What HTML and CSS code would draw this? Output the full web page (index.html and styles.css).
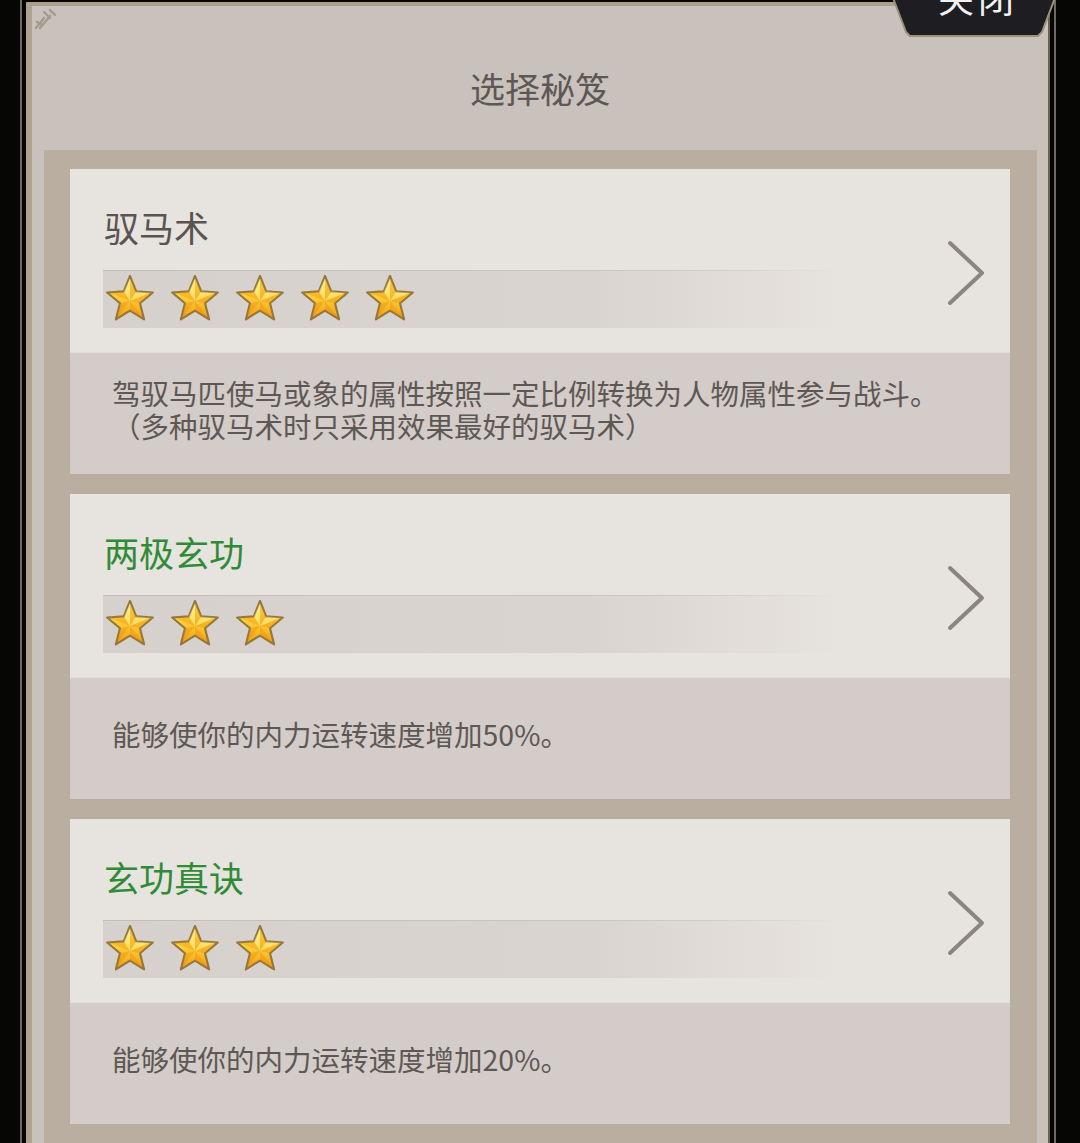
FILE: index.html
```html
<!DOCTYPE html>
<html lang="zh-CN">
<head>
<meta charset="utf-8">
<title>选择秘笈</title>
<link rel="stylesheet" href="styles.css">
</head>
<body>
<svg class="defs" width="0" height="0" aria-hidden="true">
  <defs>
    <linearGradient id="starGrad" x1="0" y1="0" x2="0" y2="1">
      <stop offset="0" stop-color="#fff27e"/>
      <stop offset="0.45" stop-color="#ffd23a"/>
      <stop offset="1" stop-color="#f29c14"/>
    </linearGradient>
    <symbol id="star" viewBox="0 0 52 50">
      <path d="M26 1 L32.47 17.1 L49.78 18.27 L36.46 29.4 L40.69 46.23 L26 37 L11.31 46.23 L15.54 29.4 L2.22 18.27 L19.53 17.1 Z" fill="url(#starGrad)" stroke="#94773a" stroke-width="2.2" stroke-linejoin="round"/>
      <g fill="#e68a0c" opacity="0.35">
        <polygon points="26,27 26,3 32.47,17.1"/>
        <polygon points="26,27 47.5,18.6 36.46,29.4"/>
        <polygon points="26,27 39.6,44.5 26,37"/>
        <polygon points="26,27 12.4,44.5 15.54,29.4"/>
        <polygon points="26,27 4.5,18.6 19.53,17.1"/>
      </g>
      <g fill="#fff8c0" opacity="0.35">
        <polygon points="26,27 26,3 19.53,17.1"/>
        <polygon points="26,27 47.5,18.6 32.47,17.1"/>
      </g>
    </symbol>
    <symbol id="chev" viewBox="0 0 40 66">
      <polyline points="4,3 36,33 4,63" fill="none" stroke="#8a8582" stroke-width="4" stroke-linecap="round" stroke-linejoin="round"/>
    </symbol>
  </defs>
</svg>

<div class="screen">
  <div class="panel">
    <svg class="corner" width="26" height="22" viewBox="0 0 26 22" aria-hidden="true">
      <path d="M2 20 L10 10 M6 20 L16 8 M10 4 L16 10 M16 2 L21 7 M3 14 L8 17" stroke="#a39b8e" stroke-width="2.4" stroke-linecap="round" fill="none"/>
    </svg>
    <h1 class="title">选择秘笈</h1>
    <div class="list">
      <div class="card">
        <div class="head">
          <div class="head-main">
            <div class="name">驭马术</div>
            <div class="bar">
              <svg class="star"><use href="#star"/></svg>
              <svg class="star"><use href="#star"/></svg>
              <svg class="star"><use href="#star"/></svg>
              <svg class="star"><use href="#star"/></svg>
              <svg class="star"><use href="#star"/></svg>
            </div>
          </div>
          <svg class="chev"><use href="#chev"/></svg>
        </div>
        <div class="desc">
          <p>驾驭马匹使马或象的属性按照一定比例转换为人物属性参与战斗。<br>（多种驭马术时只采用效果最好的驭马术）</p>
        </div>
      </div>

      <div class="card">
        <div class="head">
          <div class="head-main">
            <div class="name green">两极玄功</div>
            <div class="bar">
              <svg class="star"><use href="#star"/></svg>
              <svg class="star"><use href="#star"/></svg>
              <svg class="star"><use href="#star"/></svg>
            </div>
          </div>
          <svg class="chev"><use href="#chev"/></svg>
        </div>
        <div class="desc">
          <p>能够使你的内力运转速度增加50%。</p>
        </div>
      </div>

      <div class="card">
        <div class="head">
          <div class="head-main">
            <div class="name green">玄功真诀</div>
            <div class="bar">
              <svg class="star"><use href="#star"/></svg>
              <svg class="star"><use href="#star"/></svg>
              <svg class="star"><use href="#star"/></svg>
            </div>
          </div>
          <svg class="chev"><use href="#chev"/></svg>
        </div>
        <div class="desc">
          <p>能够使你的内力运转速度增加20%。</p>
        </div>
      </div>
    </div>
  </div>

  <div class="close">
    <svg class="close-bg" width="164" height="38" viewBox="0 0 164 38" aria-hidden="true">
      <polygon points="0,-2 13,32 17,36 145,36 149,32 162,-2" fill="#1d1d22" stroke="#9b9079" stroke-width="2"/>
    </svg>
    <span class="close-label">关闭</span>
  </div>
</div>
</body>
</html>
```

FILE: styles.css
```css
html, body {
  margin: 0;
  padding: 0;
}

body {
  width: 1080px;
  height: 1143px;
  overflow: hidden;
  background: #060605;
  font-family: "Noto Sans CJK SC", "Noto Sans", sans-serif;
}

.defs {
  position: absolute;
  width: 0;
  height: 0;
}

.screen {
  position: relative;
  height: 1143px;
  padding: 2px 0 0 26px;
  box-sizing: border-box;
}

.panel {
  position: relative;
  width: 1024px;
  height: 1160px;
  box-sizing: border-box;
  background: #c9c1bc;
  border-top: 4px solid #a9a08d;
  border-left: 6px solid #aca38f;
  border-right: 2px solid #6b624f;
  box-shadow: 0 0 0 4px #050504, 0 0 0 6px #6e6963;
}

.corner {
  position: absolute;
  left: 2px;
  top: 2px;
}

.title {
  margin: 0;
  height: 144px;
  box-sizing: border-box;
  padding-top: 62px;
  font-size: 35px;
  line-height: 40px;
  font-weight: normal;
  text-align: center;
  color: #5d5854;
}

.list {
  margin: 0 11px 0 12px;
  padding: 19px 27px 19px 26px;
  background: #b9ae9f;
  display: flex;
  flex-direction: column;
  gap: 20px;
}

.card {
  display: flex;
  flex-direction: column;
}

.head {
  height: 183px;
  box-sizing: border-box;
  background: #e7e3df;
  display: flex;
  align-items: flex-start;
  padding: 40px 0 24px 33px;
}

.head-main {
  flex: 1;
  display: flex;
  flex-direction: column;
  align-self: stretch;
}

.name {
  font-size: 35px;
  line-height: 35px;
  height: 35px;
  color: #5a5451;
  padding-left: 1px;
}

.name.green {
  color: #2f8b35;
}

.bar {
  margin-top: 26px;
  width: 740px;
  height: 58px;
  box-sizing: border-box;
  padding-left: 2px;
  display: flex;
  align-items: center;
  gap: 15px;
  background:
    linear-gradient(90deg, #c2bdb8 0%, #cbc6c1 72%, rgba(231, 227, 223, 0) 100%) top left / 100% 1px no-repeat,
    linear-gradient(90deg, #d6d1cc 0%, #d9d4cf 66%, rgba(231, 227, 223, 0) 100%);
}

.star {
  width: 50px;
  height: 48px;
  flex: none;
}

.chev {
  width: 40px;
  height: 66px;
  flex: none;
  margin: 31px 24px 0 0;
}

.desc {
  height: 122px;
  box-sizing: border-box;
  background: #d4ccc9;
  border-top: 1px solid #e3ddd8;
  display: flex;
  align-items: center;
  padding: 0 20px 10px 42px;
}

.desc p {
  margin: 0;
  font-size: 28.5px;
  line-height: 33px;
  color: #5e5855;
}

.close {
  position: absolute;
  left: 893px;
  top: 0;
  width: 164px;
  height: 38px;
}

.close-bg {
  position: absolute;
  left: 0;
  top: 0;
}

.close-label {
  position: absolute;
  left: 45px;
  top: -21px;
  font-size: 36px;
  line-height: 36px;
  letter-spacing: 4px;
  color: #f2f2f2;
  white-space: nowrap;
}
```
